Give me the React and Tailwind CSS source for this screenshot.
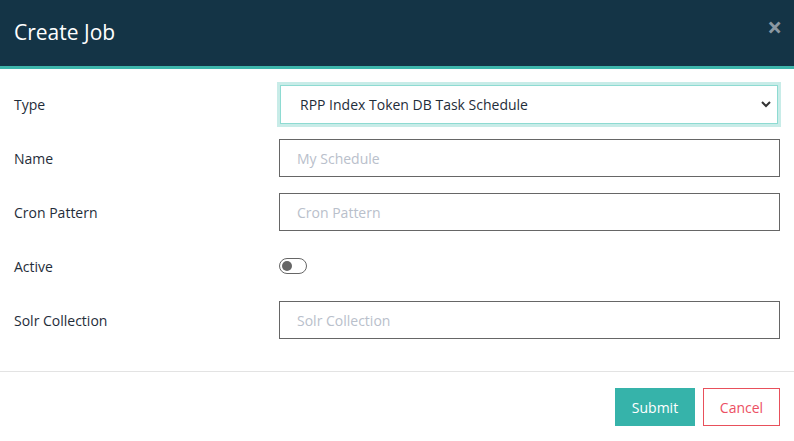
import React, { useState } from 'react';

const FONT = { fontFamily: '"Open Sans", "Noto Sans", sans-serif' };

function Row({ label, children }) {
  return (
    <div className="flex items-center h-[54px]">
      <label className="w-[265px] shrink-0 text-[14px] text-[#1f2d3a]">{label}</label>
      <div className="flex-1">{children}</div>
    </div>
  );
}

function TextInput({ placeholder }) {
  return (
    <input
      type="text"
      placeholder={placeholder}
      className="w-full h-[38px] border border-[#666] px-[17px] text-[14px] text-[#333] placeholder:text-[#b9c0cb] outline-none"
    />
  );
}

export default function App() {
  const [active, setActive] = useState(false);

  return (
    <div className="w-[794px] h-[441px] bg-white flex flex-col" style={FONT}>
      {/* Header */}
      <div className="h-[69px] bg-[#143446] border-b-[3px] border-[#3db5ab] flex items-center justify-between pl-[14px] pr-[12px] shrink-0">
        <h1 className="text-[21px] text-white leading-none -mt-[1px]">Create Job</h1>
        <button type="button" className="text-[#8a98a2] text-[26px] font-bold leading-none -mt-[12px]">×</button>
      </div>

      {/* Body */}
      <div className="pl-[14px] pr-[14px] pt-[8px] flex flex-col">
        <Row label="Type">
          <div className="relative border-[3px] border-[#c8ece8] -ml-[2px] -mr-[1px]">
            <select
              defaultValue="rpp"
              className="w-full h-[39px] appearance-none border border-[#8edbd2] pl-[19px] pr-8 text-[14px] text-[#1f2d3a] bg-white outline-none"
            >
              <option value="rpp">RPP Index Token DB Task Schedule</option>
            </select>
            <svg className="absolute right-[6px] top-1/2 -translate-y-1/2 pointer-events-none" width="12" height="12" viewBox="0 0 12 12">
              <path d="M2 4 L6 8 L10 4" stroke="#333" strokeWidth="2" fill="none" />
            </svg>
          </div>
        </Row>
        <Row label="Name">
          <TextInput placeholder="My Schedule" />
        </Row>
        <Row label="Cron Pattern">
          <TextInput placeholder="Cron Pattern" />
        </Row>
        <Row label="Active">
          <button
            type="button"
            onClick={() => setActive(!active)}
            className="w-[28px] h-[16px] rounded-full border border-[#666] flex items-center px-[2px] bg-white"
          >
            <span className="w-[10px] h-[10px] rounded-full bg-[#666]" />
          </button>
        </Row>
        <Row label="Solr Collection">
          <TextInput placeholder="Solr Collection" />
        </Row>
      </div>

      {/* Footer */}
      <div className="border-t border-[#e3e3e3] mt-[24px] flex justify-end gap-[8px] pt-[16px] pr-[14px]">
        <button type="button" className="w-[80px] h-[38px] bg-[#36b3aa] text-white text-[14px]">Submit</button>
        <button type="button" className="w-[77px] h-[38px] border border-[#e8505b] text-[#ec4f63] text-[14px] bg-white">Cancel</button>
      </div>
    </div>
  );
}
